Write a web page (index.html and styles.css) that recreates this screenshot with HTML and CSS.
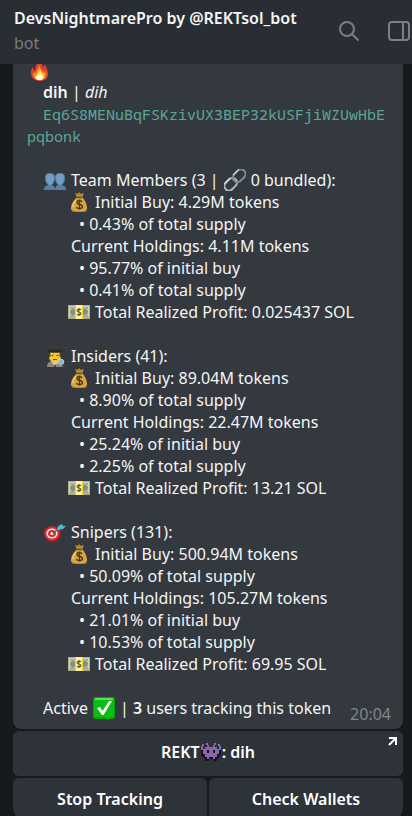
FILE: index.html
```
<!DOCTYPE html>
<html lang="en">
<head>
  <meta charset="UTF-8" />
  <meta name="viewport" content="width=device-width, initial-scale=1.0"/>
  <title>DevsNightmarePro by @REKTsol_bot</title>
  <link rel="stylesheet" href="styles.css">
</head>
<body>
  <!-- Shared emoji -->
  <svg class="sprite" aria-hidden="true">
    <symbol id="bag" viewBox="0 0 22 22">
      <path d="M7 2l3 1 1-2 2 2 3-1-2 5H9z" fill="#b98a35"/>
      <path d="M9 6h5c3 3 5 7 5 11 0 3-2 4-4 4H8c-3 0-5-1-5-4 0-4 3-8 6-11z" fill="#d9a63d"/>
      <path d="M8 9c-2 2-3 4-3 7" fill="none" stroke="#f0cb72" stroke-width="1.5"/>
      <path d="M4 19c3 2 11 2 14 0-1 2-2 2-4 2H8c-2 0-3 0-4-2z" fill="#a87522"/>
      <path d="M8 6.500h6" stroke="#704d20" stroke-width="1.500"/>
      <path d="M14 11c-1-2-5-2-5 .5s5.500 1.500 5.500 4-5 3-6 .5M11.500 8.500v10" fill="none" stroke="#493b28" stroke-width="1.500"/>
    </symbol>
    <symbol id="cash" viewBox="0 0 22 22">
      <rect x="0" y="4" width="22" height="14" fill="#a9ad91"/>
      <rect x="1" y="5" width="20" height="11" fill="#d5d6bd"/>
      <path d="M2 7h5M2 15h5M15 7h5M15 15h5" stroke="#79816a"/>
      <circle cx="5" cy="11" r="3" fill="#899078"/>
      <circle cx="17" cy="11" r="3" fill="#899078"/>
      <rect x="7" y="4" width="8" height="14" fill="#f4d246"/>
      <rect x="8" y="4" width="6" height="14" fill="#fff0a0"/>
      <path d="M13 9c-1-1.500-4-1-4 .5s4 1 4 3-3 2-4 .5M11 7v8" fill="none" stroke="#665b32" stroke-width="1.200"/>
    </symbol>
  </svg>

  <div class="app">
    <header class="topbar">
      <div class="peer">
        <h1 class="peer-name">DevsNightmarePro by @REKTsol_bot</h1>
        <div class="peer-status">bot</div>
      </div>
      <button class="icon-btn search-btn" type="button" aria-label="Search">
        <svg width="22" height="22" viewBox="0 0 22 22" fill="none" stroke="#7c7f82" stroke-width="2">
          <circle cx="9" cy="8" r="7"/>
          <path d="M14 13l6.500 6.500"/>
        </svg>
      </button>
      <button class="icon-btn" type="button" aria-label="Info panel">
        <svg width="22" height="22" viewBox="0 0 22 22" fill="none" stroke="#7c7f82" stroke-width="2">
          <rect x="1" y="1" width="20" height="18" rx="3"/>
          <path d="M15 1v18"/>
        </svg>
      </button>
    </header>

    <main class="chat">
      <article class="bubble">
        <div class="line fire-line">
          <svg class="emoji" viewBox="0 0 22 22" role="img" aria-label="fire">
            <path d="M10 0c1 4 5 4 5 9 1-1 1-3 1-4 3 4 4 7 4 10 0 5-4 7-8 7s-9-2-9-8c0-3 1-5 2-6 0 2 1 3 2 4 0-5 3-7 3-12z" fill="#e8412c"/>
            <path d="M11 6c1 4 4 5 4 8l2-2c2 5 0 9-5 9s-8-3-6-8l2 2c0-4 3-5 3-9z" fill="#ff9623"/>
            <path d="M12 10c0 3 4 5 4 8-1 4-8 4-9 0l2-1c0-3 3-4 3-7z" fill="#ffe866"/>
            <ellipse cx="11.500" cy="18.500" rx="3.500" ry="2.500" fill="#fffbd2"/>
          </svg>
        </div>
        <div class="line indent"><b>dih</b> | <i>dih</i></div>
        <div class="address">Eq6S8MENuBqFSKzivUX3BEP32kUSFjiWZUwHbEpqbonk</div>

        <section class="group">
          <div class="line title">
            <svg class="emoji" viewBox="0 0 22 22" role="img" aria-label="people">
              <path d="M11 21c0-3 1-4 3-5-2-2-3-4-3-7 0-4 2-5 5-5s5 1 5 5c0 3-1 5-3 7 3 1 4 2 4 5z" fill="#557fa3"/>
              <path d="M0 21c0-3 1-4 4-5-2-2-3-4-3-7 0-4 2-5 5-5s5 1 5 5c0 3-1 5-3 7 2 1 3 2 3 5z" fill="#557fa3"/>
              <path d="M2 9c0-3 1-4 4-4s4 1 4 4-2 7-4 7-4-4-4-7zM12 9c0-3 1-4 4-4s4 1 4 4-2 7-4 7-4-4-4-7z" fill="#729ec2"/>
            </svg>
            <span>Team Members (3 |</span>
            <svg class="emoji" viewBox="0 0 22 22" role="img" aria-label="link" fill="none">
              <g transform="rotate(-45 11 11)">
                <rect x="-2" y="6.500" width="14" height="9" rx="4.500" stroke="#aeb8c1" stroke-width="2"/>
                <rect x="10" y="6.500" width="14" height="9" rx="4.500" stroke="#7f8d98" stroke-width="2"/>
                <path d="M1 6h8M13 6h8" stroke="#e2e8eb"/>
              </g>
            </svg>
            <span>0 bundled):</span>
          </div>
          <div class="line money"><svg class="emoji"><use href="#bag"/></svg><span>Initial Buy: 4.29M tokens</span></div>
          <div class="line bullet">• 0.43% of total supply</div>
          <div class="line sub">Current Holdings: 4.11M tokens</div>
          <div class="line bullet">• 95.77% of initial buy</div>
          <div class="line bullet">• 0.41% of total supply</div>
          <div class="line money"><svg class="emoji"><use href="#cash"/></svg><span>Total Realized Profit: 0.025437 SOL</span></div>
        </section>

        <section class="group">
          <div class="line title">
            <svg class="emoji" viewBox="0 0 22 22" role="img" aria-label="detective">
              <path d="M3 22c0-4 2-6 8-6s8 2 8 6z" fill="#8e887d"/>
              <path d="M7 16l4 5 4-5z" fill="#e8e8e2"/>
              <path d="M11 18l-1 4h2z" fill="#34383c"/>
              <ellipse cx="11" cy="11.500" rx="6" ry="6.500" fill="#f8c52e"/>
              <path d="M5 8h1.500v4H5zM15.500 8H17v4h-1.500z" fill="#5d4632"/>
              <path d="M6 6c0-4 1-6 3-6l2 1 2-1c2 0 3 2 3 6z" fill="#3d3b3a"/>
              <ellipse cx="11" cy="6" rx="8" ry="1.800" fill="#292929"/>
              <path d="M7.500 10.500h2M12.500 10.500h2M9 14.500h4" stroke="#69461c" stroke-width="1.200"/>
              <circle cx="17" cy="17" r="2.800" fill="#83b6d8" stroke="#b9cad4"/>
              <path d="M18.500 19.500l1 2" stroke="#3c454b" stroke-width="1.500"/>
            </svg>
            <span>Insiders (41):</span>
          </div>
          <div class="line money"><svg class="emoji"><use href="#bag"/></svg><span>Initial Buy: 89.04M tokens</span></div>
          <div class="line bullet">• 8.90% of total supply</div>
          <div class="line sub">Current Holdings: 22.47M tokens</div>
          <div class="line bullet">• 25.24% of initial buy</div>
          <div class="line bullet">• 2.25% of total supply</div>
          <div class="line money"><svg class="emoji"><use href="#cash"/></svg><span>Total Realized Profit: 13.21 SOL</span></div>
        </section>

        <section class="group">
          <div class="line title">
            <svg class="emoji" viewBox="0 0 22 22" role="img" aria-label="target">
              <ellipse cx="9" cy="13.500" rx="8" ry="7.500" fill="#9e1c24"/>
              <ellipse cx="8" cy="12.500" rx="7.800" ry="7.300" fill="#db2834"/>
              <ellipse cx="8" cy="12.500" rx="4.800" ry="4.300" fill="#d72c36" stroke="#f3e7e5" stroke-width="1.600"/>
              <circle cx="8" cy="12.500" r="1.600" fill="#fff"/>
              <path d="M8.500 12.500L19 4.500" stroke="#28717b" stroke-width="1.500"/>
              <path d="M13 9l1-4 4-2 1 2 3 0-3 3-4 1z" fill="#4cb9c3"/>
            </svg>
            <span>Snipers (131):</span>
          </div>
          <div class="line money"><svg class="emoji"><use href="#bag"/></svg><span>Initial Buy: 500.94M tokens</span></div>
          <div class="line bullet">• 50.09% of total supply</div>
          <div class="line sub">Current Holdings: 105.27M tokens</div>
          <div class="line bullet">• 21.01% of initial buy</div>
          <div class="line bullet">• 10.53% of total supply</div>
          <div class="line money"><svg class="emoji"><use href="#cash"/></svg><span>Total Realized Profit: 69.95 SOL</span></div>
        </section>

        <footer class="bubble-footer">
          <div class="line active">
            <span>Active</span>
            <svg class="emoji" viewBox="0 0 22 22" role="img" aria-label="yes">
              <rect width="22" height="22" rx="3" fill="#00a80b"/>
              <rect x="1" y="1" width="20" height="19" rx="2" fill="#08be14"/>
              <path d="M2 1h18v2H2z" fill="#5ddc60"/>
              <path d="M4 11l3-1 2.500 4L16 4l3 0-8.500 14H9z" fill="#fff"/>
            </svg>
            <span>| <b>3</b> users tracking this token</span>
          </div>
          <time class="time">20:04</time>
        </footer>
      </article>

      <div class="keyboard">
        <button class="key wide" type="button">
          <span>REKT</span>
          <svg class="emoji" viewBox="0 0 22 22" aria-hidden="true">
            <path d="M6 3h2v3h6V3h2v3h2v3h3v6h-2v2h-2v3h-4v-2H9v2H5v-3H3v-2H1V9h4z" fill="#17121d"/>
            <path d="M6 2h2v2h1v2h4V4h1V2h2v2h-1v2h2v2h2V5h-1V3h2v2h1v4h-2v4h-2v3h-2v2h-2v-2H9v2H7v-2H5v-3H3V9H1V5h1V3h2v2H3v3h2V6h2V4H6z" fill="#8866b0"/>
            <path d="M7 9h2v3H7zM13 9h2v3h-2z" fill="#17121d"/>
          </svg>
          <span>: dih</span>
          <svg class="link-arrow" width="9" height="9" viewBox="0 0 9 9" fill="none" stroke="#fff" stroke-width="2" aria-hidden="true">
            <path d="M1 1h7v7M8 1L1 8"/>
          </svg>
        </button>
        <button class="key bottom-left" type="button">Stop Tracking</button>
        <button class="key bottom-right" type="button">Check Wallets</button>
      </div>
    </main>
  </div>
</body>
</html>
```

FILE: styles.css
```
* {
  box-sizing: border-box;
}
body {
  margin: 0;
  background-color: #18191d;
  color: #f5f5f5;
  font-family: "Noto Sans", "Open Sans", sans-serif;
  font-size: 16px;
  line-height: 22px;
}
b {
  font-weight: 600;
}
.sprite {
  display: none;
}
.app {
  display: flex;
  flex-direction: column;
  height: 100vh;
}

/* Top bar */
.topbar {
  display: flex;
  flex-shrink: 0;
  align-items: center;
  height: 64px;
  padding: 0 2px 3px 14px;
  background-color: #282e33;
}
.peer {
  flex: 1;
  min-width: 0;
}
.peer-name {
  margin: 0 0 3px;
  overflow: hidden;
  font-size: 16px;
  font-weight: 600;
  line-height: 22px;
  text-overflow: ellipsis;
  white-space: nowrap;
}
.peer-status {
  color: #797c7f;
}
.icon-btn {
  display: flex;
  padding: 2px 0 0;
  border: none;
  background: none;
  cursor: pointer;
}
.search-btn {
  margin-right: 28px;
}

/* Message */
.chat {
  flex: 1;
  min-height: 0;
  padding: 0 9px 0 13px;
  overflow: hidden;
}
.bubble {
  margin-top: -5px;
  padding: 0 12px 10px 14px;
  border-radius: 0 0 8px 8px;
  background-color: #33393f;
}
.line {
  display: flex;
  height: 22px;
  white-space: pre;
}
.emoji {
  flex-shrink: 0;
  width: 22px;
  height: 22px;
}
.fire-line {
  padding-left: 1px;
}
.indent {
  padding-left: 16px;
}
.address {
  color: #5aa795;
  font-family: "Noto Sans Mono", "Liberation Mono", monospace;
  font-size: 15px;
  text-indent: 16px;
  word-break: break-all;
}
.group {
  margin-top: 22px;
}
.title {
  gap: 5px;
  padding-left: 17px;
}
.money {
  gap: 5px;
  padding-left: 41px;
}
.sub {
  padding-left: 44px;
}
.bullet {
  padding-left: 52px;
}
.bubble-footer {
  display: flex;
  justify-content: space-between;
  margin-top: 22px;
}
.active {
  gap: 5px;
  padding-left: 16px;
}
.time {
  align-self: flex-end;
  margin-bottom: -6px;
  color: #82868a;
}

/* Bot keyboard */
.keyboard {
  display: grid;
  grid-template-columns: 1fr 1fr;
  gap: 2px;
  margin-top: 2px;
}
.key {
  position: relative;
  display: flex;
  align-items: center;
  justify-content: center;
  height: 45px;
  padding: 0 0 3px;
  border: none;
  border-radius: 6px;
  background-color: #2e3339;
  color: #fff;
  font: inherit;
  font-weight: 600;
  white-space: pre;
  cursor: pointer;
}
.wide {
  grid-column: 1 / -1;
}
.bottom-left {
  border-bottom-left-radius: 16px;
}
.bottom-right {
  border-bottom-right-radius: 16px;
}
.link-arrow {
  position: absolute;
  top: 6px;
  right: 6px;
}
```
